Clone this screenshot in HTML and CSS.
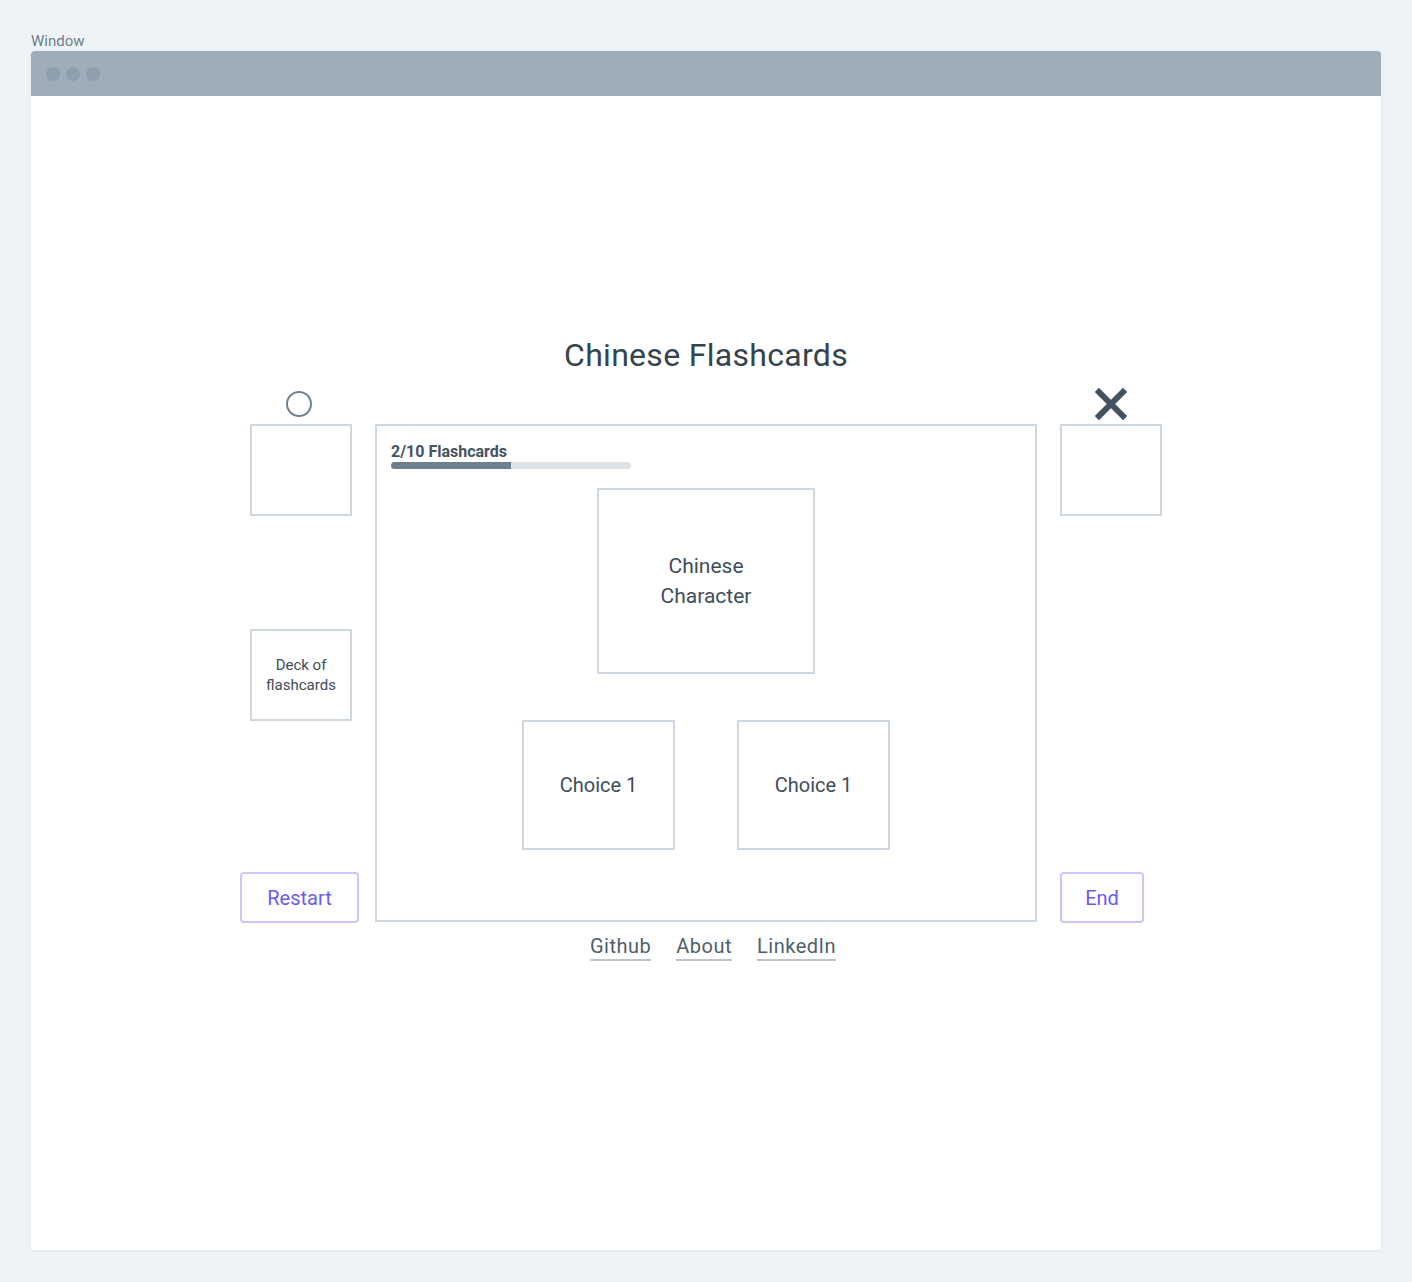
FILE: index.html
```html
<!DOCTYPE html>
<html lang="en">
<head>
    <meta charset="UTF-8">
    <meta name="viewport" content="width=device-width, initial-scale=1.0">
    <title>Chinese Flashcards</title>
    <link rel="stylesheet" href="styles.css">
</head>
<body>
    <div class="page">
        <div class="window-label">Window</div>
        <div class="window">
            <div class="titlebar">
                <span class="dot"></span>
                <span class="dot"></span>
                <span class="dot"></span>
            </div>
            <div class="window-body">
                <h1>Chinese Flashcards</h1>

                <div class="stage">
                    <div class="icon-cell icon-left">
                        <svg width="30" height="30" viewBox="0 0 30 30">
                            <circle cx="14" cy="14" r="12" fill="none" stroke="#6f808d" stroke-width="2"/>
                        </svg>
                    </div>
                    <div></div>
                    <div class="icon-cell icon-right">
                        <svg width="34" height="34" viewBox="0 0 34 34">
                            <path d="M5 5 L29 29 M29 5 L5 29" stroke="#435260" stroke-width="6" stroke-linecap="square"/>
                        </svg>
                    </div>

                    <div class="side side-left">
                        <div class="slot"></div>
                        <div class="slot deck">Deck of<br>flashcards</div>
                        <button class="btn">Restart</button>
                    </div>

                    <div class="board">
                        <div class="progress-label">2/10 Flashcards</div>
                        <div class="progress"><div class="progress-fill" style="width: 50%"></div></div>
                        <div class="card">Chinese<br>Character</div>
                        <div class="choices">
                            <div class="choice">Choice 1</div>
                            <div class="choice">Choice 1</div>
                        </div>
                    </div>

                    <div class="side side-right">
                        <div class="slot"></div>
                        <button class="btn btn-end">End</button>
                    </div>
                </div>

                <nav class="footer-links">
                    <a href="#">Github</a>
                    <a href="#">About</a>
                    <a href="#">LinkedIn</a>
                </nav>
            </div>
        </div>
    </div>
</body>
</html>
```

FILE: styles.css
```css
body {
    margin: 0;
    padding: 0;
    background-color: #eff3f6;
    font-family: Roboto, "Liberation Sans", sans-serif;
    color: #35434f;
}
.page {
    padding: 32px 31px 31px 31px;
}
.window-label {
    font-size: 15px;
    line-height: 18px;
    color: #6d7e8b;
    margin-bottom: 1px;
}
.window {
    background-color: #fff;
    border-radius: 4px 4px 0 0;
    box-shadow: 0 1px 4px rgba(0,0,0,0.06);
}
.titlebar {
    height: 45px;
    background-color: #9eadba;
    border-radius: 4px 4px 0 0;
    display: flex;
    align-items: center;
    gap: 6px;
    padding-left: 15px;
}
.dot {
    width: 14px;
    height: 14px;
    border-radius: 50%;
    background-color: #8e9fad;
}
.window-body {
    height: 1154px;
    padding-top: 239px;
    box-sizing: border-box;
}
h1 {
    margin: 0 0 15px 0;
    font-size: 32px;
    line-height: 40px;
    font-weight: 400;
    text-align: center;
    color: #35434f;
    letter-spacing: 0.3px;
}
.stage {
    display: grid;
    grid-template-columns: 135px 662px 125px;
    grid-template-rows: 34px 498px;
    margin-left: 209px;
}
.icon-cell {
    display: flex;
    justify-content: center;
    align-items: flex-start;
}
.icon-left {
    padding-right: 16px;
}
.icon-right {
    padding-left: 23px;
    justify-content: flex-start;
}
.icon-right svg {
    margin-left: 34px;
    margin-top: -3px;
}
.side {
    display: flex;
    flex-direction: column;
    align-items: flex-start;
}
.side-left {
    padding-right: 16px;
}
.side-left .slot {
    margin-left: 10px;
}
.side-right {
    padding-left: 23px;
}
.board {
    border: 2px solid #cfd8e0;
    padding: 17px 14px 0 14px;
    display: flex;
    flex-direction: column;
    align-items: center;
}
.slot {
    width: 102px;
    height: 92px;
    box-sizing: border-box;
    border: 2px solid #cfd8e0;
}
.deck {
    margin-top: 113px;
    display: flex;
    align-items: center;
    justify-content: center;
    text-align: center;
    font-size: 15px;
    line-height: 20px;
    color: #3f4d59;
}
.btn {
    margin-top: auto;
    margin-bottom: -1px;
    width: 119px;
    height: 51px;
    box-sizing: border-box;
    border: 2px solid #cbc6fb;
    border-radius: 4px;
    background-color: #fff;
    color: #6a5cf0;
    font-family: inherit;
    font-size: 20px;
    cursor: pointer;
}
.btn-end {
    width: 84px;
}
.progress-label {
    align-self: flex-start;
    font-size: 16px;
    line-height: 17px;
    font-weight: 700;
    color: #45535f;
}
.progress {
    align-self: flex-start;
    margin-top: 2px;
    width: 240px;
    height: 7px;
    border-radius: 4px;
    background-color: #dde2e7;
    overflow: hidden;
}
.progress-fill {
    height: 100%;
    background-color: #6f808d;
}
.card {
    margin-top: 19px;
    width: 218px;
    height: 186px;
    box-sizing: border-box;
    border: 2px solid #cfd8e0;
    display: flex;
    align-items: center;
    justify-content: center;
    text-align: center;
    font-size: 21px;
    line-height: 30px;
    color: #3f4d59;
}
.choices {
    margin-top: 46px;
    display: flex;
    gap: 62px;
}
.choice {
    width: 153px;
    height: 130px;
    box-sizing: border-box;
    border: 2px solid #cfd8e0;
    display: flex;
    align-items: center;
    justify-content: center;
    font-size: 20px;
    color: #3f4d59;
}
.footer-links {
    display: flex;
    justify-content: center;
    gap: 25px;
    margin-top: 11px;
    padding-left: 14px;
}
.footer-links a {
    font-size: 20px;
    line-height: 26px;
    letter-spacing: 0.5px;
    color: #4f5f6d;
    text-decoration: none;
    border-bottom: 2px solid #bcc6d0;
}
```
